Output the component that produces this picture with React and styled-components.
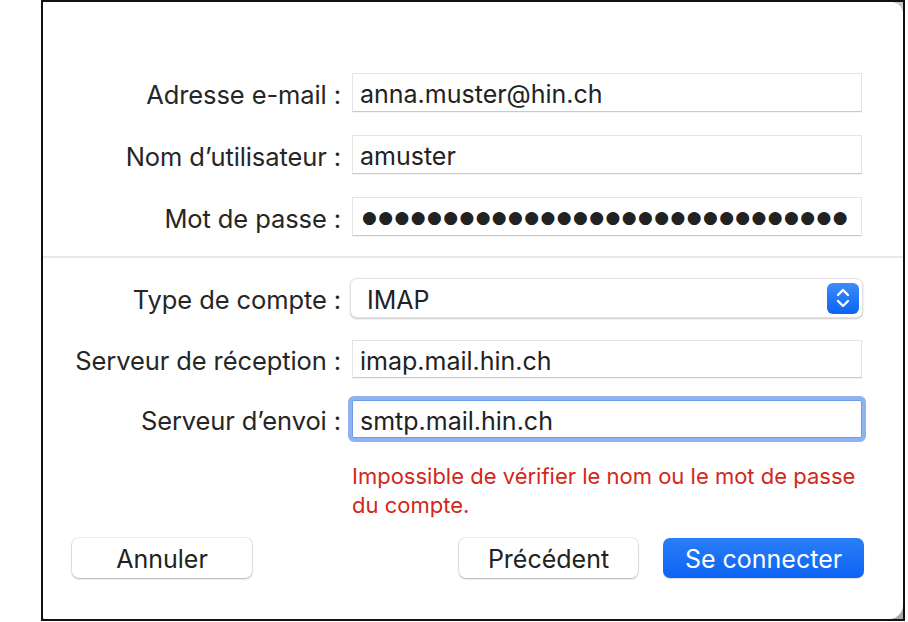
import React from "react";
import styled, { createGlobalStyle } from "styled-components";

const GlobalStyle = createGlobalStyle`
  html, body {
    margin: 0;
    padding: 0;
    background: #ffffff;
  }
  body {
    font-family: "Inter", "Liberation Sans", sans-serif;
    color: #262626;
  }
`;

export default function App() {
  return (
    <>
      <GlobalStyle />
      <Page>
        <Frame>
          <Dialog>
            <FormGrid $top={71} $gap={23}>
              <Label>Adresse e-mail :</Label>
              <TextField>anna.muster@hin.ch</TextField>
              <Label>Nom d’utilisateur :</Label>
              <TextField>amuster</TextField>
              <Label>Mot de passe :</Label>
              <TextField>
                <Dots>{"●".repeat(30)}</Dots>
              </TextField>
            </FormGrid>

            <Divider />

            <FormGrid $top={20} $gap={22}>
              <Label>Type de compte :</Label>
              <Select>
                <span>IMAP</span>
                <Stepper>
                  <svg width="18" height="24" viewBox="0 0 18 24" fill="none">
                    <path
                      d="M4 9 L9 4 L14 9"
                      stroke="#fff"
                      strokeWidth="2.4"
                      strokeLinecap="round"
                      strokeLinejoin="round"
                    />
                    <path
                      d="M4 15 L9 20 L14 15"
                      stroke="#fff"
                      strokeWidth="2.4"
                      strokeLinecap="round"
                      strokeLinejoin="round"
                    />
                  </svg>
                </Stepper>
              </Select>
              <Label>Serveur de réception :</Label>
              <TextField $h={38}>imap.mail.hin.ch</TextField>
              <Label>Serveur d’envoi :</Label>
              <TextField $h={38} $focused>
                smtp.mail.hin.ch
              </TextField>
              <span />
              <ErrorText>
                Impossible de vérifier le nom ou le mot de passe
                <br />
                du compte.
              </ErrorText>
            </FormGrid>

            <ButtonBar>
              <Button $width={180}>Annuler</Button>
              <Spacer />
              <Button $width={179}>Précédent</Button>
              <Button $width={201} $primary>
                Se connecter
              </Button>
            </ButtonBar>
          </Dialog>
        </Frame>
      </Page>
    </>
  );
}

const Page = styled.div`
  padding-left: 41px;
  width: 908px;
  height: 622px;
  box-sizing: border-box;
`;

const Frame = styled.div`
  width: 864px;
  height: 621px;
  box-sizing: border-box;
  border: 2px solid #111;
  background: linear-gradient(180deg, #c8c8c8, #a8a8a8);
  display: flex;
`;

const Dialog = styled.div`
  flex: 1;
  background: #fff;
  border-radius: 0 12px 14px 2px;
  display: flex;
  flex-direction: column;
`;

const FormGrid = styled.div`
  display: grid;
  grid-template-columns: 298px 510px;
  column-gap: 11px;
  row-gap: ${(p) => p.$gap}px;
  align-items: center;
  padding-top: ${(p) => p.$top}px;
`;

const Label = styled.div`
  text-align: right;
  font-size: 25.5px;
  padding-top: 3px;
  letter-spacing: -0.1px;
  color: #262626;
  white-space: nowrap;
`;

const TextField = styled.div`
  height: ${(p) => p.$h || 39}px;
  box-sizing: border-box;
  display: flex;
  align-items: center;
  padding: 3px 0 0 7px;
  font-size: 25px;
  color: #222;
  background: #fff;
  border: 1px solid #e4e4e4;
  border-bottom-color: #c9c9c9;
  box-shadow: 0 1px 0 rgba(0, 0, 0, 0.04);
  ${(p) =>
    p.$focused &&
    `
    border: 1px solid #6f9ae6;
    outline: 4px solid #8fb2f3;
    border-radius: 2px;
    box-shadow: 0 0 0 1px #8fb2f3;
  `}
`;

const Dots = styled.span`
  font-family: "DejaVu Sans", sans-serif;
  font-size: 17px;
  letter-spacing: 1.4px;
  color: #222;
  padding-left: 2px;
  margin-top: -3px;
`;

const Divider = styled.div`
  height: 2px;
  background: #e8e8e8;
  margin-top: 20px;
`;

const Select = styled.div`
  height: 40px;
  margin-left: -2px;
  margin-right: -1px;
  box-sizing: border-box;
  display: flex;
  align-items: center;
  justify-content: space-between;
  padding: 0 3px 0 16px;
  font-size: 25px;
  color: #222;
  background: #fff;
  border-radius: 7px;
  border: 1px solid #e2e2e2;
  box-shadow: 0 1px 2px rgba(0, 0, 0, 0.22);

  & > span {
    padding-top: 3px;
  }
`;

const Stepper = styled.div`
  width: 32px;
  height: 31px;
  border-radius: 6px;
  background: linear-gradient(180deg, #3d8cfa, #0b63f3);
  display: flex;
  align-items: center;
  justify-content: center;
`;

const ErrorText = styled.div`
  margin-top: 2px;
  font-size: 22px;
  line-height: 29px;
  color: #d3271a;
  white-space: nowrap;
`;

const ButtonBar = styled.div`
  display: flex;
  align-items: center;
  gap: 25px;
  padding: 18px 39px 0 29px;
`;

const Spacer = styled.div`
  flex: 1;
`;

const Button = styled.div`
  width: ${(p) => p.$width}px;
  height: 40px;
  box-sizing: border-box;
  display: flex;
  align-items: center;
  justify-content: center;
  padding-top: 2px;
  border-radius: 7px;
  font-size: 25px;
  color: ${(p) => (p.$primary ? "#fff" : "#222")};
  background: ${(p) =>
    p.$primary ? "linear-gradient(180deg, #2a7ef8, #0c63f2)" : "#fff"};
  box-shadow: ${(p) =>
    p.$primary
      ? "0 1px 1px rgba(0, 0, 0, 0.15)"
      : "0 0 0 1px rgba(0, 0, 0, 0.07), 0 1px 2px rgba(0, 0, 0, 0.25)"};
`;
